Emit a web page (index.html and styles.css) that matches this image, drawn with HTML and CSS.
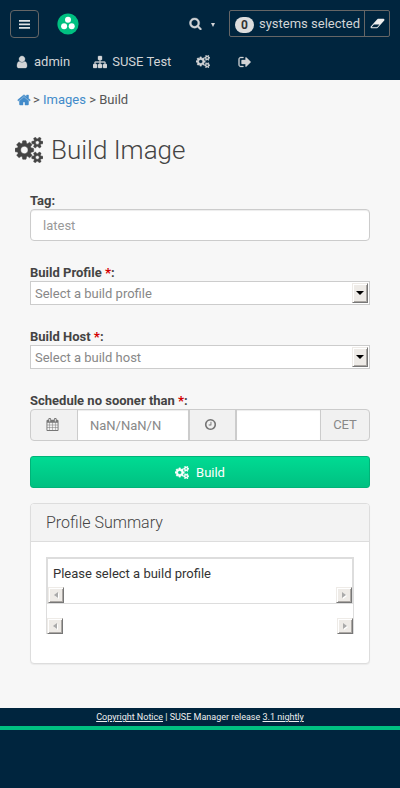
FILE: index.html
```html
<!DOCTYPE html>
<html lang="en">
<head>
<meta charset="utf-8">
<title>Build Image</title>
<link rel="stylesheet" href="styles.css">
</head>
<body>
<svg class="defs" width="0" height="0">
<symbol id="cogs" viewBox="0 0 1920 1792"><path d="M896 896q0-106-75-181t-181-75-181 75-75 181 75 181 181 75 181-75 75-181zm768 512q0-52-38-90t-90-38-90 38-38 90q0 53 37.500 90.500t90.500 37.500 90.500-37.500 37.500-90.500zm0-1024q0-52-38-90t-90-38-90 38-38 90q0 53 37.500 90.500t90.500 37.500 90.500-37.500 37.500-90.500zm-384 421v185q0 10-7 19.500t-16 10.500l-155 24q-11 35-32 76 34 48 90 115 7 11 7 20 0 12-7 19-23 30-82.500 89.500t-78.500 59.500q-11 0-21-7l-115-90q-37 19-77 31-11 108-23 155-7 24-30 24h-186q-11 0-20-7.500t-10-17.500l-23-153q-34-10-75-31l-118 89q-7 7-20 7-11 0-21-8-144-133-144-160 0-9 7-19 10-14 41-53t47-61q-23-44-35-82l-152-24q-10-1-17-9.500t-7-19.500v-185q0-10 7-19.500t16-10.500l155-24q11-35 32-76-34-48-90-115-7-11-7-20 0-12 7-20 22-30 82-89t79-59q11 0 21 7l115 90q34-18 77-32 11-108 23-154 7-24 30-24h186q11 0 20 7.500t10 17.500l23 153q34 10 75 31l118-89q8-7 20-7 11 0 21 8 144 133 144 160 0 8-7 19-12 16-42 54t-45 60q23 48 34 82l152 23q10 2 17 10.500t7 19.500zm640 533v140q0 16-149 31-12 27-30 52 51 113 51 138 0 4-4 7-122 71-124 71-8 0-46-47t-52-68q-20 2-30 2t-30-2q-14 21-52 68t-46 47q-2 0-124-71-4-3-4-7 0-25 51-138-18-25-30-52-149-15-149-31v-140q0-16 149-31 13-29 30-52-51-113-51-138 0-4 4-7 4-2 35-20t59-34 30-16q8 0 46 46.500t52 67.500q20-2 30-2t30 2q51-71 92-112l6-2q4 0 124 70 4 3 4 7 0 25-51 138 17 23 30 52 149 15 149 31zm0-1024v140q0 16-149 31-12 27-30 52 51 113 51 138 0 4-4 7-122 71-124 71-8 0-46-47t-52-68q-20 2-30 2t-30-2q-14 21-52 68t-46 47q-2 0-124-71-4-3-4-7 0-25 51-138-18-25-30-52-149-15-149-31v-140q0-16 149-31 13-29 30-52-51-113-51-138 0-4 4-7 4-2 35-20t59-34 30-16q8 0 46 46.500t52 67.500q20-2 30-2t30 2q51-71 92-112l6-2q4 0 124 70 4 3 4 7 0 25-51 138 17 23 30 52 149 15 149 31z"/></symbol>
</svg>

<header class="header">
  <div class="bar">
    <button class="toggle" aria-label="Menu"><svg viewBox="0 0 11 10"><path d="M0 1h11v1.800H0zM0 4.500h11v1.800H0zM0 8h11v1.800H0z"/></svg></button>
    <svg class="logo" viewBox="0 0 22 22"><circle cx="11" cy="11" r="10.600" fill="#00c081"/><g fill="#fff"><circle cx="11" cy="6.700" r="3"/><circle cx="7.100" cy="13.200" r="3"/><circle cx="14.700" cy="13.200" r="3"/></g></svg>
    <svg class="ico search" viewBox="0 0 1792 1792"><path d="M1216 832q0-185-131.500-316.500t-316.500-131.500-316.500 131.500-131.500 316.500 131.500 316.500 316.500 131.500 316.500-131.500 131.500-316.500zm512 832q0 52-38 90t-90 38q-54 0-90-38l-343-342q-179 124-399 124-143 0-273.500-55.500t-225-150-150-225-55.500-273.500 55.500-273.500 150-225 225-150 273.500-55.500 273.500 55.500 225 150 150 225 55.500 273.500q0 220-124 399l343 343q37 37 37 90z"/></svg>
    <span class="caret"></span>
    <div class="ssm">
      <div class="selected"><span class="badge">0</span>systems selected</div>
      <div class="clear"><svg viewBox="0 0 2048 1792"><path d="M960 1408l336-384h-768l-336 384h768zm1013-1077q15 34 9.500 71.500t-30.500 65.500l-896 1024q-38 44-96 44h-768q-38 0-69.500-20.500t-47.500-54.500q-15-34-9.500-71.500t30.500-65.500l896-1024q38-44 96-44h768q38 0 69.500 20.500t47.500 54.500z"/></svg></div>
    </div>
  </div>
  <nav class="nav">
    <svg class="ico user" viewBox="0 0 1792 1792"><path d="M1536 1399q0 109-62.500 187t-150.500 78h-854q-88 0-150.500-78t-62.500-187q0-85 8.500-160.500t31.500-152 58.500-131 94-89 134.500-34.500q131 128 313 128t313-128q76 0 134.500 34.500t94 89 58.500 131 31.500 152 8.500 160.500zm-256-887q0 159-112.500 271.500t-271.500 112.500-271.500-112.500-112.500-271.500 112.500-271.500 271.500-112.500 271.500 112.500 112.500 271.500z"/></svg>
    <span class="name">admin</span>
    <svg class="ico sitemap" viewBox="0 0 1792 1792"><path d="M1792 1248v320q0 40-28 68t-68 28h-320q-40 0-68-28t-28-68v-320q0-40 28-68t68-28h96v-192h-512v192h96q40 0 68 28t28 68v320q0 40-28 68t-68 28h-320q-40 0-68-28t-28-68v-320q0-40 28-68t68-28h96v-192h-512v192h96q40 0 68 28t28 68v320q0 40-28 68t-68 28h-320q-40 0-68-28t-28-68v-320q0-40 28-68t68-28h96v-192q0-52 38-90t90-38h512v-192h-96q-40 0-68-28t-28-68v-320q0-40 28-68t68-28h320q40 0 68 28t28 68v320q0 40-28 68t-68 28h-96v192h512q52 0 90 38t38 90v192h96q40 0 68 28t28 68z"/></svg>
    <span class="org">SUSE Test</span>
    <svg class="cogs"><use href="#cogs"/></svg>
    <svg class="ico" viewBox="0 0 1792 1792"><path d="M704 1440q0 4 1 20t.5 26.500-3 23.500-10 19.500-20.500 6.500h-320q-119 0-203.500-84.500t-84.500-203.500v-704q0-119 84.500-203.500t203.500-84.500h320q13 0 22.500 9.500t9.500 22.500q0 4 1 20t.5 26.500-3 23.500-10 19.500-20.500 6.500h-320q-66 0-113 47t-47 113v704q0 66 47 113t113 47h312l11.500 1 11.500 3 8 5.500 7 9 2 13.500zm928-544q0 26-19 45l-544 544q-19 19-45 19t-45-19-19-45v-288h-448q-26 0-45-19t-19-45v-384q0-26 19-45t45-19h448v-288q0-26 19-45t45-19 45 19l544 544q19 19 19 45z"/></svg>
  </nav>
</header>

<main class="main">
  <div class="crumbs"><svg viewBox="0 0 1792 1792"><path d="M1472 992v480q0 26-19 45t-45 19h-384v-384h-256v384h-384q-26 0-45-19t-19-45v-480q0-1 .5-3t.5-3l575-474 575 474q1 2 1 6zm223-69l-62 74q-8 9-21 11h-3q-13 0-21-7l-692-577-692 577q-12 8-24 7-13-2-21-11l-62-74q-8-10-7-23.500t11-21.500l719-599q32-26 76-26t76 26l244 204v-195q0-14 9-23t23-9h192q14 0 23 9t9 23v408l219 182q10 8 11 21.500t-7 23.500z"/></svg><span>&gt; <a>Images</a> &gt; Build</span></div>
  <h1><svg class="cogs"><use href="#cogs"/></svg>Build Image</h1>
  <form class="form">
    <label>Tag:</label>
    <div class="input">latest</div>
    <label>Build Profile <b>*</b>:</label>
    <div class="select"><span>Select a build profile</span><i class="drop"></i></div>
    <label>Build Host <b>*</b>:</label>
    <div class="select"><span>Select a build host</span><i class="drop"></i></div>
    <label>Schedule no sooner than <b>*</b>:</label>
    <div class="group">
      <div class="addon cal"><svg viewBox="0 0 1792 1792"><path d="M192 1664h288v-288h-288v288zm352 0h320v-288h-320v288zm-352-352h288v-320h-288v320zm352 0h320v-320h-320v320zm-352-384h288v-288h-288v288zm736 736h320v-288h-320v288zm-384-736h320v-288h-320v288zm768 736h288v-288h-288v288zm-384-352h320v-320h-320v320zm-352-864v-288q0-13-9.500-22.500t-22.500-9.500h-64q-13 0-22.500 9.500t-9.500 22.500v288q0 13 9.500 22.500t22.500 9.500h64q13 0 22.500-9.500t9.500-22.500zm736 864h288v-320h-288v320zm-384-384h320v-288h-320v288zm384 0h288v-288h-288v288zm32-480v-288q0-13-9.500-22.500t-22.500-9.500h-64q-13 0-22.500 9.500t-9.500 22.500v288q0 13 9.500 22.500t22.500 9.500h64q13 0 22.500-9.500t9.500-22.500zm384-64v1280q0 52-38 90t-90 38h-1408q-52 0-90-38t-38-90v-1280q0-52 38-90t90-38h128v-96q0-66 47-113t113-47h64q66 0 113 47t47 113v96h384v-96q0-66 47-113t113-47h64q66 0 113 47t47 113v96h128q52 0 90 38t38 90z"/></svg></div>
      <div class="field date">NaN/NaN/N</div>
      <div class="addon clock"><svg viewBox="0 0 1792 1792"><path d="M1024 544v448q0 14-9 23t-23 9h-320q-14 0-23-9t-9-23v-64q0-14 9-23t23-9h224v-352q0-14 9-23t23-9h64q14 0 23 9t9 23zm416 352q0-148-73-273t-198-198-273-73-273 73-198 198-73 273 73 273 198 198 273 73 273-73 198-198 73-273zm224 0q0 209-103 385.500t-279.500 279.500-385.500 103-385.500-103-279.500-279.500-103-385.500 103-385.500 279.500-279.500 385.500-103 385.500 103 279.500 279.500 103 385.500z"/></svg></div>
      <div class="field time"></div>
      <div class="addon zone">CET</div>
    </div>
    <button type="button" class="build"><svg class="cogs"><use href="#cogs"/></svg>Build</button>
    <section class="panel">
      <h2>Profile Summary</h2>
      <div class="panel-body">
        <div class="well">
          <p>Please select a build profile</p>
          <div class="scroll"><i class="sb left"></i><i class="sb right"></i></div>
        </div>
        <div class="scroll outer"><i class="sb left"></i><i class="sb right"></i></div>
      </div>
    </section>
  </form>
</main>

<footer>
  <div class="legal"><a>Copyright Notice</a> | SUSE Manager release <a>3.1 nightly</a></div>
  <div class="rest"></div>
</footer>
</body>
</html>
```
FILE: styles.css
```css
* { box-sizing: border-box; }
body { margin: 0; height: 788px; display: flex; flex-direction: column; background: #f7f7f7; font: 13px/18px Roboto, sans-serif; color: #444; overflow: hidden; }
.defs { position: absolute; }
svg { display: block; flex: none; fill: currentColor; }
h1, h2, p { margin: 0; }
button { font: inherit; padding: 0; }

.header { height: 80px; background: #00253e; color: #d2d4d6; }
.bar { display: flex; align-items: center; height: 47px; padding: 0 10px; }
.toggle { width: 29px; height: 28px; margin-top: 1px; padding: 0 8px; border: 1px solid #666; border-radius: 4px; background: none; color: #e0e2e4; }
.toggle svg { width: 11px; height: 10px; }
.logo { width: 22px; height: 22px; margin-left: 18px; }
.ico { width: 14px; height: 14px; }
.search { width: 13px; height: 13px; margin-left: 110px; stroke: currentColor; stroke-width: 50; }
.caret { margin: 3px 0 0 9px; border: 2.500px solid transparent; border-top: 4px solid #d2d4d6; border-bottom: 0; }
.ssm { display: flex; width: 161px; height: 27px; margin-left: auto; border: 1px solid #666; border-radius: 2px; }
.selected { display: flex; align-items: center; flex: 1; padding-left: 5px; white-space: nowrap; }
.badge { width: 19px; height: 16px; margin: 2px 5px 0 0; border-radius: 8px; background: #ddd; color: #333; font-size: 12px; font-weight: 700; line-height: 17px; text-align: center; }
.clear { width: 25px; border-left: 1px solid #666; display: flex; align-items: center; justify-content: center; }
.clear svg { width: 15px; height: 13px; color: #eee; }
.nav { display: flex; align-items: center; height: 29px; padding-left: 15px; }
.name { margin: 0 23px 0 5px; }
.org { margin: 0 24px 0 5px; }
.cogs { width: 14px; height: 13px; }
.nav svg { stroke: currentColor; stroke-width: 40; }
.nav .cogs { margin: 0 28px 0 1px; }

.main { height: 628px; }
.crumbs { display: flex; align-items: center; height: 40px; padding-left: 17px; color: #555; }
.crumbs svg { width: 14px; height: 14px; margin-right: 2px; color: #428bca; stroke: currentColor; stroke-width: 60; }
.crumbs a { color: #428bca; }
h1 { display: flex; align-items: center; height: 60px; padding-left: 15px; font-size: 26px; font-weight: 300; line-height: 30px; }
h1 .cogs { width: 28px; height: 26px; margin-right: 8px; stroke: currentColor; stroke-width: 35; }

.form { padding: 12px 30px 0; }
label { display: block; height: 17px; line-height: 18px; font-weight: 700; }
label b { color: #d40000; }
.input { height: 32px; margin-bottom: 23px; padding: 0 12px; border: 1px solid #ccc; border-radius: 4px; background: #fff; box-shadow: inset 0 1px 1px rgba(0,0,0,.075); line-height: 32px; color: #999; }
.select { display: flex; justify-content: space-between; height: 24px; margin-bottom: 23px; padding: 1px 1px 1px 4px; border: 1px solid #ccc; background: #fff; line-height: 22px; color: #888; }
.drop, .sb { display: flex; align-items: center; justify-content: center; width: 16px; background: #eeebe7; border: 1px solid; border-color: #eeebe7 #777 #777 #eeebe7; box-shadow: inset 1px 1px #fff, inset -1px -1px #aca8a4; }
.drop { height: 20px; }
.drop::before { content: ""; border: 4px solid transparent; border-top-color: #000; border-bottom: 0; }
.group { display: flex; height: 32px; border: 1px solid #ccc; border-radius: 4px; background: #f1f1f1; line-height: 32px; color: #888; overflow: hidden; }
.addon { display: flex; align-items: center; justify-content: center; }
.addon svg { width: 13px; height: 13px; }
.cal { width: 46px; padding: 0 3px 2px 0; color: #777; }
.clock { width: 45px; padding: 0 4px 2px 0; color: #777; }
.field { background: #fff; box-shadow: inset 0 1px 1px rgba(0,0,0,.075); }
.date { width: 113px; padding: 0 12px; border: solid #ccc; border-width: 0 2px 0 1px; }
.time { width: 86px; border: solid #ccc; border-width: 0 1px 0 2px; }
.zone { flex: 1; line-height: 30px; }
.build { display: flex; align-items: center; justify-content: center; gap: 7px; width: 100%; height: 32px; margin: 15px 0; padding-top: 1px; border: 1px solid #00b378; border-radius: 3px; background: linear-gradient(#00db93, #00c081); color: #fff; }
.build .cogs { stroke: currentColor; stroke-width: 50; }
.panel { height: 161px; border: 1px solid #ddd; border-radius: 4px; background: #fff; box-shadow: 0 1px 1px rgba(0,0,0,.05); }
h2 { height: 38px; padding: 0 15px; border-bottom: 1px solid #ddd; border-radius: 3px 3px 0 0; background: #f3f3f3; font-size: 16px; font-weight: 300; line-height: 37px; }
.panel-body { padding: 15px; }
.well { height: 47px; border: solid #ddd; border-width: 2px 2px 1px; }
.well p { height: 28px; padding: 6px 5px 0; line-height: 18px; color: #333; }
.scroll { display: flex; justify-content: space-between; height: 16px; }
.outer { height: 30px; padding-top: 14px; border: solid #ddd; border-width: 0 1px; }
.sb { height: 16px; }
.sb::before { content: ""; border: 3px solid transparent; filter: drop-shadow(1px 1px 0 #fff); }
.left::before { border-right: 4px solid #aaa; border-left: 0; }
.right::before { border-left: 4px solid #aaa; border-right: 0; }

footer { height: 80px; background: #00253e; }
.legal { height: 18px; font-size: 9px; line-height: 18px; text-align: center; color: #eee; }
.legal a { text-decoration: underline; }
.rest { height: 4px; background: #00c081; }
```
